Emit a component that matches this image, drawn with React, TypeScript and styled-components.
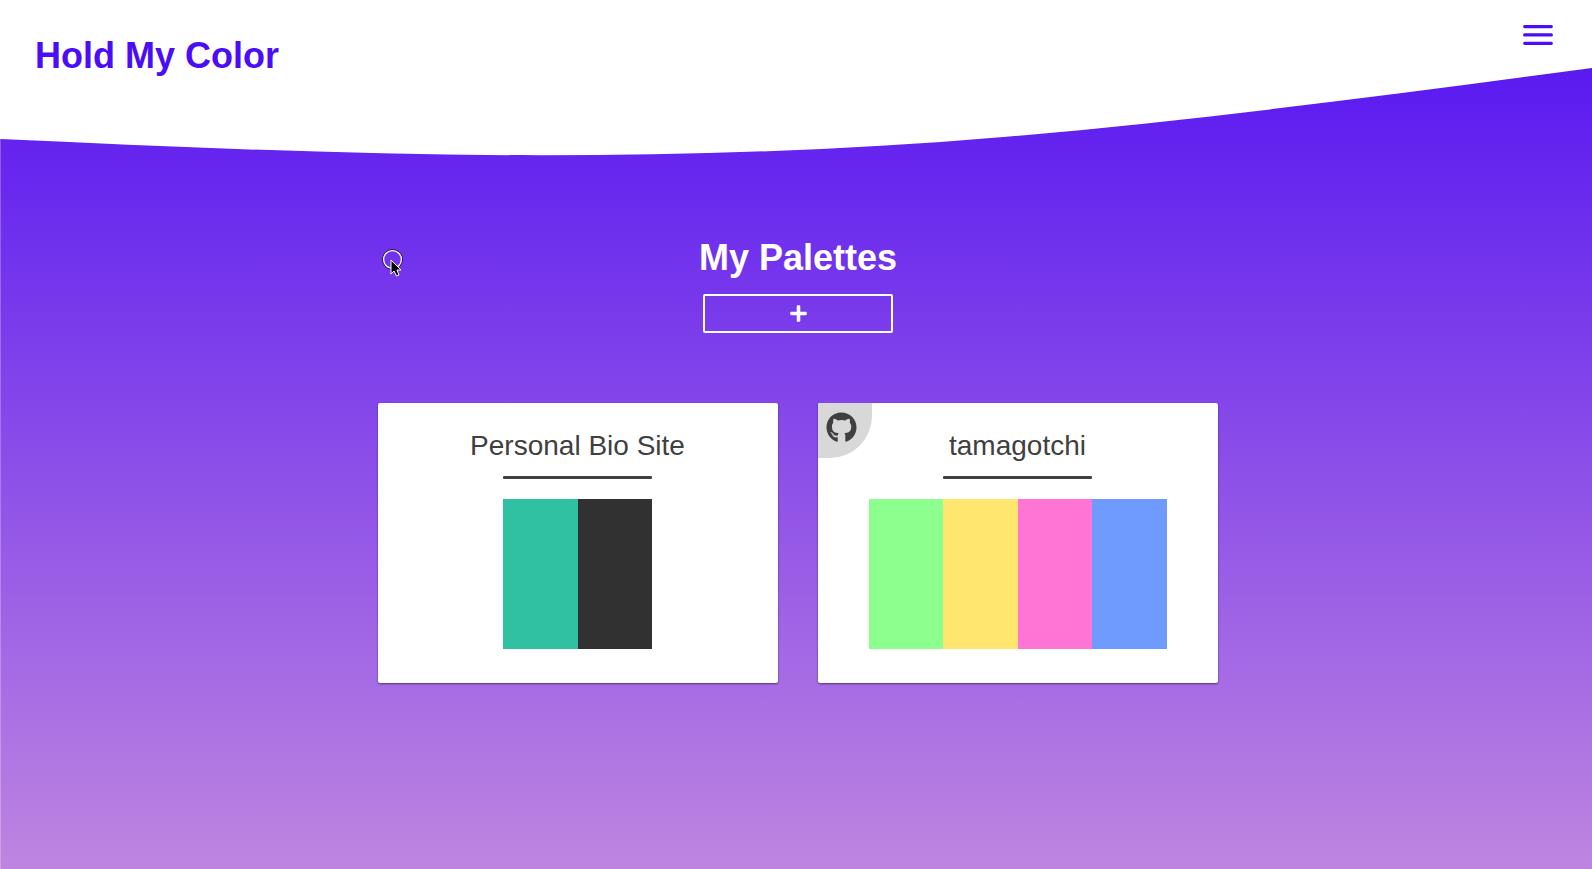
import React from 'react';
import styled, { createGlobalStyle } from 'styled-components';
import { FaGithub, FaPlus } from 'react-icons/fa';

const GlobalStyle = createGlobalStyle`
  *, *::before, *::after { box-sizing: border-box; }
  body {
    margin: 0;
    font-family: "Liberation Sans", Arial, sans-serif;
    color: #404040;
  }
`;

const Page = styled.div`
  display: grid;
  grid-template-rows: auto 1fr;
  min-height: 100vh;
  background: linear-gradient(#5210f2, #be85e0);
  box-shadow: inset 1px 0 rgba(255, 255, 255, 0.25);
`;

const Header = styled.header`
  display: grid;
  height: 156px;
  > * { grid-area: 1 / 1; }
`;

const Wave = styled.svg`
  display: block;
  width: 100%;
  height: 156px;
  fill: #ffffff;
`;

const HeaderBar = styled.div`
  display: flex;
  justify-content: space-between;
  align-items: flex-start;
  padding: 20px 36px 20px 35px;
  color: #4b0cf7;
`;

const SiteTitle = styled.h1`
  margin: 12px 0 0;
  font-size: 36px;
  line-height: 48px;
  font-weight: 700;
`;

const MenuButton = styled.button`
  display: flex;
  padding: 0;
  border: 0;
  background: none;
  color: inherit;
  cursor: pointer;
`;

const Main = styled.main`
  display: flex;
  flex-direction: column;
  align-items: center;
  padding: 78px 20px 40px 24px;
`;

const Heading = styled.h2`
  margin: 0;
  font-size: 36px;
  line-height: 48px;
  font-weight: 700;
  color: #ffffff;
`;

const AddButton = styled.button`
  display: flex;
  align-items: center;
  justify-content: center;
  width: 190px;
  height: 39px;
  margin-top: 12px;
  padding: 0;
  border: 2px solid #ffffff;
  border-radius: 2px;
  background: none;
  color: #ffffff;
  font-size: 19px;
  cursor: pointer;
`;

const CardList = styled.div`
  display: flex;
  flex-wrap: wrap;
  justify-content: center;
  gap: 40px;
  margin-top: 70px;
`;

const Card = styled.article`
  position: relative;
  display: flex;
  flex-direction: column;
  align-items: center;
  width: 400px;
  padding: 21px 21px 34px 20px;
  overflow: hidden;
  border-radius: 2px;
  background: #ffffff;
  box-shadow: 0 1px 2px rgba(0, 0, 0, 0.5);
`;

const CardTitle = styled.h3`
  margin: 0;
  font-size: 28px;
  line-height: 44px;
  font-weight: 400;
`;

const Rule = styled.hr`
  width: 149px;
  height: 3px;
  margin: 8px 0 20px;
  border: 0;
  border-radius: 1px;
  background: #404040;
`;

const Swatches = styled.div<{ $count: number }>`
  display: flex;
  width: calc(149px * ${({ $count }) => $count} / 2);
  height: 150px;
`;

const Swatch = styled.div<{ $color: string }>`
  flex: 1;
  background: ${({ $color }) => $color};
`;

const RepoLink = styled.a`
  position: absolute;
  top: 0;
  left: 0;
  display: flex;
  width: 54px;
  height: 55px;
  padding: 9px 8px;
  border-radius: 0 0 42px 0;
  background: #d8d8d8;
  color: #404040;
  font-size: 31px;
`;

const Cursor = styled.svg`
  position: absolute;
  top: 248px;
  left: 380px;
  pointer-events: none;
`;

const palettes = [
  { name: 'Personal Bio Site', colors: ['#2fc1a2', '#313131'], repo: '' },
  {
    name: 'tamagotchi',
    colors: ['#8cff8f', '#ffe76f', '#ff75d6', '#6f9bff'],
    repo: '#tamagotchi',
  },
];

export default function App() {
  return (
    <>
      <GlobalStyle />
      <Page>
        <Header>
          <Wave viewBox="0 0 1592 156" preserveAspectRatio="none" aria-hidden="true">
            <path d="M0 0H1592V68C1395 94.3 1197 120.6 1000 137.3C847 150.3 693 155.2 540 155.2C360 155.2 180 147.1 0 139Z" />
          </Wave>
          <HeaderBar>
            <SiteTitle>Hold My Color</SiteTitle>
            <MenuButton aria-label="Menu">
              <svg width="36" height="30" viewBox="0 0 36 30" stroke="currentColor" strokeWidth="3.3" strokeLinecap="round">
                <path d="M4.7 6.6H31.3M4.7 14.9H31.3M4.7 23.3H31.3" />
              </svg>
            </MenuButton>
          </HeaderBar>
        </Header>
        <Main>
          <Heading>My Palettes</Heading>
          <AddButton aria-label="Add palette">
            <FaPlus />
          </AddButton>
          <CardList>
            {palettes.map((palette) => (
              <Card key={palette.name}>
                {palette.repo && (
                  <RepoLink href={palette.repo} aria-label="GitHub repository">
                    <FaGithub />
                  </RepoLink>
                )}
                <CardTitle>{palette.name}</CardTitle>
                <Rule />
                <Swatches $count={palette.colors.length}>
                  {palette.colors.map((color) => (
                    <Swatch key={color} $color={color} />
                  ))}
                </Swatches>
              </Card>
            ))}
          </CardList>
        </Main>
        <Cursor width="26" height="30" viewBox="0 0 26 30" aria-hidden="true">
          <circle cx="12.5" cy="11.5" r="9.9" fill="none" stroke="#111" />
          <circle cx="12.5" cy="11.5" r="8.9" fill="none" stroke="#fff" strokeWidth="1.3" />
          <path d="M11 12V26L14 23L16.5 28L19 27L17 22H21Z" fill="#000" stroke="#fff" />
        </Cursor>
      </Page>
    </>
  );
}
